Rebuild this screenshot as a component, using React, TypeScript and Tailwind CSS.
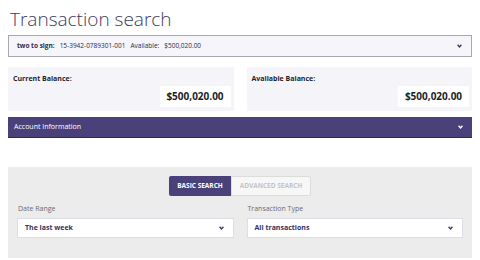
import { ReactNode } from "react";

const Chevron = ({ className = "" }: { className?: string }) => (
    <svg width="5" height="4" viewBox="0 0 5 4" className={className}>
        <path d="M0.6 0.8 L2.5 2.9 L4.4 0.8" fill="none" stroke="currentColor" strokeWidth="1.4" />
    </svg>
);

const BalanceCard = ({ label, amount }: { label: string; amount: string }) => (
    <div className="h-[44px] bg-[#f5f5f9] pl-[5px] pr-[3px] pt-[7px] flex flex-col">
        <span className="text-[7px] leading-[9px] font-bold text-[#1f1f2b]">{label}</span>
        <div className="flex justify-end mt-[3px]">
            <div className="w-[71px] h-[21px] bg-white flex items-center justify-center text-[10px] font-bold text-[#1d1d27]">
                {amount}
            </div>
        </div>
    </div>
);

const Select = ({ label, value }: { label: string; value: ReactNode }) => (
    <div className="flex flex-col">
        <span className="text-[7px] leading-[9px] text-[#6b6b75] pl-[1px]">{label}</span>
        <div className="mt-[5px] h-[20px] bg-white border border-[#dedee6] flex items-center justify-between pl-[7px] pr-[9px]">
            <span className="text-[7px] font-bold text-[#34315c]">{value}</span>
            <Chevron className="text-[#3d3a5c]" />
        </div>
    </div>
);

export default function App() {
    return (
        <div className="w-[480px] h-[260px] bg-white px-2 overflow-hidden font-['Open_Sans',sans-serif]">
            <h1 className="pt-[6px] pl-[2px] text-[19px] leading-[26px] font-light text-[#3c3a5e]">
                Transaction search
            </h1>

            <div className="mt-[3px] h-[22px] border border-[#a8a8b4] bg-[#f5f5fa] flex items-center justify-between pl-[8px] pr-[9px] text-[6.5px] text-[#2c2b45]">
                <div className="flex gap-[5px]">
                    <span className="font-bold">two to sign:</span>
                    <span>15-3942-0789301-001</span>
                    <span>Available:</span>
                    <span>$500,020.00</span>
                </div>
                <Chevron className="text-[#3d3a5c]" />
            </div>

            <div className="mt-[10px] grid grid-cols-2 gap-[13px]">
                <BalanceCard label="Current Balance:" amount="$500,020.00" />
                <BalanceCard label="Available Balance:" amount="$500,020.00" />
            </div>

            <div className="mt-[6px] h-[21px] bg-[#4a417a] border-b border-[#2f2a55] flex items-center justify-between pl-[6px] pr-[9px]">
                <span className="text-[7px] text-white">Account Information</span>
                <Chevron className="text-white" />
            </div>

            <div className="mt-[29px] h-[91px] bg-[#ececec] px-[9px] pt-[9px]">
                <div className="flex justify-center">
                    <button className="h-[20px] w-[62px] bg-[#4a417a] text-white text-[6.5px] font-bold rounded-l-[2px]">
                        BASIC SEARCH
                    </button>
                    <button className="h-[20px] w-[80px] bg-[#f7f7f7] border border-[#dcdcdc] text-[#c4c4c8] text-[6.5px] font-bold rounded-r-[2px]">
                        ADVANCED SEARCH
                    </button>
                </div>
                <div className="mt-[8px] grid grid-cols-2 gap-[13px]">
                    <Select label="Date Range" value="The last week" />
                    <Select label="Transaction Type" value="All transactions" />
                </div>
            </div>
        </div>
    );
}
